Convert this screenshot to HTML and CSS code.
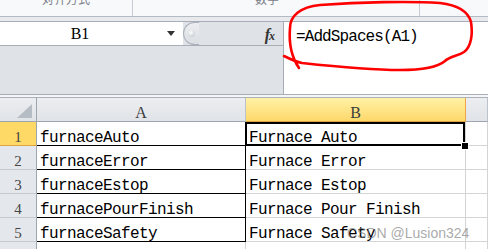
FILE: index.html
```html
<!DOCTYPE html>
<html lang="zh-CN">

<head>
    <meta charset="UTF-8">
    <title>AddSpaces</title>
    <link rel="stylesheet" href="styles.css">
</head>

<body>
    <!-- 功能区底部 -->
    <div class="ribbon">
        <div class="group g1"><span>对齐方式</span></div>
        <div class="group g2"><span>数字</span></div>
        <div class="group g3"></div>
    </div>
    <div class="band"></div>

    <!-- 编辑栏 -->
    <div class="bar">
        <div class="bar-left">
            <div class="name-row">
                <div class="name-box">
                    <span class="name">B1</span>
                    <span class="caret"></span>
                </div>
                <div class="knob"><span class="dot"></span></div>
                <div class="fx"><i>f</i><small>x</small></div>
            </div>
        </div>
        <div class="formula">=AddSpaces(A1)</div>
    </div>
    <div class="sep"></div>

    <!-- 工作表 -->
    <div class="sheet">
        <div class="hd corner"><span class="tri"></span></div>
        <div class="hd ch">A</div>
        <div class="hd ch sel">B</div>
        <div class="hd ch"></div>

        <div class="rh sel">1</div>
        <div class="c a">furnaceAuto</div>
        <div class="c active">Furnace Auto</div>
        <div class="c"></div>

        <div class="rh">2</div>
        <div class="c a">furnaceError</div>
        <div class="c">Furnace Error</div>
        <div class="c"></div>

        <div class="rh">3</div>
        <div class="c a">furnaceEstop</div>
        <div class="c">Furnace Estop</div>
        <div class="c"></div>

        <div class="rh">4</div>
        <div class="c a">furnacePourFinish</div>
        <div class="c">Furnace Pour Finish</div>
        <div class="c"></div>

        <div class="rh">5</div>
        <div class="c a">furnaceSafety</div>
        <div class="c">Furnace Safety</div>
        <div class="c"></div>

        <div class="rh last"></div>
        <div class="c last"></div>
        <div class="c last"></div>
        <div class="c last"></div>
    </div>

    <!-- 红圈标注 -->
    <svg class="ink" width="488" height="249" viewBox="0 0 488 249">
        <path d="M 284 56 C 290 59, 296 62, 302 63 C 330 66, 370 70, 400 70 C 420 70, 438 67, 445 61 C 450 56, 458 56, 464 52 C 471 47, 473 35, 471 22 C 468 11, 458 5, 440 3 C 410 1, 360 2, 320 5 C 300 7, 290 16, 290 28 C 289 40, 290 55, 299 68" fill="none" stroke="#f00" stroke-width="2.6" stroke-linecap="round" stroke-linejoin="round"/>
    </svg>

    <div class="watermark">CSDN @Lusion324</div>
</body>

</html>
```

FILE: styles.css
```css
* {
    margin: 0;
    padding: 0;
    box-sizing: border-box;
}

body {
    width: 488px;
    height: 249px;
    overflow: hidden;
    position: relative;
    background: #fff;
    font-family: 'Liberation Mono', 'Noto Sans CJK SC', monospace;
}

/* 功能区底部 */
.ribbon {
    display: flex;
    height: 17px;
    background: #f8f9fa;
    border-bottom: 1px solid #b4bac2;
    overflow: hidden;
}

.ribbon .group {
    height: 16px;
    border-right: 1px solid #c6cbd2;
    text-align: center;
    overflow: hidden;
}

.ribbon .group span {
    display: block;
    margin-top: -8px;
    font: 12px/14px 'Noto Sans CJK SC', sans-serif;
    color: #7a8089;
}

.g1 {
    width: 133px;
}

.g2 {
    width: 287px;
    padding-right: 18px;
}

.g3 {
    flex: 1;
    border-right: none !important;
}

.band {
    height: 4px;
    background: #e8eaed;
}

/* 编辑栏 */
.bar {
    display: flex;
    height: 74px;
    border-top: 1px solid #a7aeb7;
    border-bottom: 1px solid #a7aeb7;
}

.bar-left {
    width: 283px;
    background: #dfe2e7;
}

.name-row {
    display: flex;
    height: 24px;
    border-bottom: 1px solid #a7aeb7;
}

.name-box {
    display: flex;
    align-items: center;
    width: 183px;
    background: #fff;
}

.name-box .name {
    width: 160px;
    text-align: center;
    font: 16px 'Liberation Serif', serif;
    color: #000;
}

.name-box .caret {
    margin-left: 7px;
    border-top: 5px solid #333;
    border-left: 4px solid transparent;
    border-right: 4px solid transparent;
}

.knob {
    display: flex;
    align-items: center;
    width: 16px;
    height: 23px;
    padding-left: 4px;
    border: 1px solid #aab1ba;
    border-right: none;
    border-radius: 12px 0 0 12px;
    background: linear-gradient(#eceef1, #dadde2);
}

.knob .dot {
    width: 7px;
    height: 7px;
    border-radius: 50%;
    background: radial-gradient(circle at 40% 35%, #fff, #b9bec5);
}

.fx {
    margin-left: auto;
    padding: 2px 8px 0 0;
    font: italic bold 16px/21px 'Liberation Serif', serif;
    color: #333;
}

.fx small {
    font-size: 12px;
    margin-left: -1px;
}

.formula {
    flex: 1;
    background: #fff;
    border-left: 1px solid #a7aeb7;
    padding: 4px 0 0 12px;
    font-size: 16px;
    letter-spacing: -0.9px;
    line-height: 22px;
    color: #000;
}

.sep {
    height: 3px;
    background: #f5f6f8;
    border-bottom: 1px solid #aab1ba;
}

/* 工作表 */
.sheet {
    display: grid;
    grid-template-columns: 37px 209px 220px 1fr;
    grid-template-rows: repeat(6, 24px) 7px;
}

.hd {
    display: flex;
    align-items: flex-end;
    justify-content: center;
    background: linear-gradient(#eceef1, #e0e3e7);
    border-right: 1px solid #bcc2ca;
    border-bottom: 1px solid #9da5af;
    font: 16px/16px 'Liberation Serif', serif;
    color: #3c3c3c;
}

.hd.corner {
    justify-content: flex-end;
    padding: 0 4px 3px 0;
    border-right-color: #9da5af;
}

.corner .tri {
    width: 15px;
    height: 14px;
    background: #b6bcc4;
    clip-path: polygon(100% 0, 100% 100%, 0 100%);
}

.hd.sel {
    background: linear-gradient(#fff1a6, #fdd86a);
    border-right-color: #eea447;
    border-bottom-color: #e2a23e;
}

.rh {
    display: flex;
    align-items: flex-end;
    justify-content: center;
    background: #e4e7eb;
    border-right: 1px solid #9da5af;
    border-bottom: 1px solid #c4c9d0;
    font: 15px/16px 'Liberation Serif', serif;
    color: #444;
}

.rh.sel {
    background: #ffd965;
    border-bottom-color: #e2a23e;
}

.c {
    display: flex;
    align-items: flex-end;
    padding-left: 3px;
    border-right: 1px solid #d4d4d4;
    border-bottom: 1px solid #d4d4d4;
    font-size: 16px;
    letter-spacing: -0.6px;
    line-height: 14px;
    color: #000;
    white-space: nowrap;
}

.c.a {
    border-right-color: #000;
    border-bottom-color: #000;
}

.last {
    border-bottom: none;
}

.c.active {
    position: relative;
}

.c.active::after {
    content: '';
    position: absolute;
    top: 0;
    left: -1px;
    right: 0;
    bottom: -1px;
    border: 2px solid #000;
}

.c.active::before {
    content: '';
    position: absolute;
    right: -3px;
    bottom: -4px;
    width: 6px;
    height: 6px;
    background: #000;
    outline: 1px solid #fff;
    z-index: 1;
}

/* 标注层 */
.ink {
    position: absolute;
    left: 0;
    top: 0;
    pointer-events: none;
}

.watermark {
    position: absolute;
    left: 347px;
    top: 224px;
    font: 14px/18px 'Liberation Sans', sans-serif;
    color: rgba(120, 120, 120, 0.65);
    white-space: nowrap;
}
```
